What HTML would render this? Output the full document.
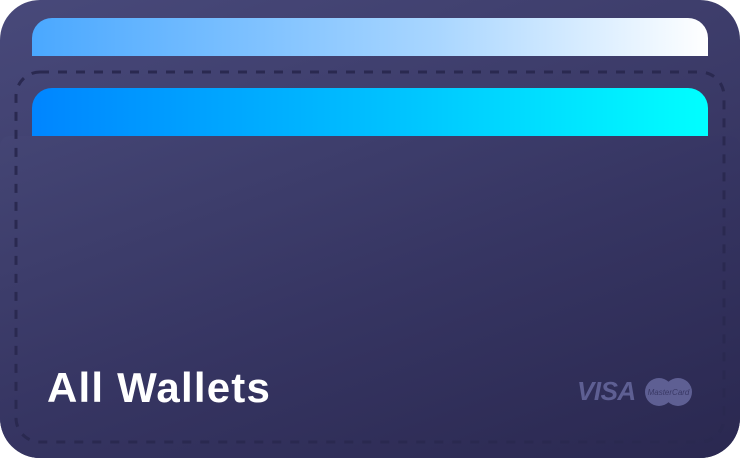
<!DOCTYPE html>
<html><head><style>
body{margin:0;width:740px;height:458px;background:#fff;overflow:hidden;position:relative;font-family:"Liberation Sans",sans-serif}
.w{position:absolute;left:0;top:0;width:740px;height:458px;border-radius:40px;background:linear-gradient(160deg,#48497a 0%,#3a3966 50%,#2a2850 100%)}
.c1{position:absolute;left:32px;top:18px;width:676px;height:38px;border-radius:20px 20px 0 0;background:linear-gradient(90deg,#4aa8ff,#a9d6ff 60%,#fff)}
.c2{position:absolute;left:32px;top:88px;width:676px;height:60px;border-radius:20px 20px 0 0;background:linear-gradient(90deg,#0085ff,#00c4ff 55%,#00ffff)}
.pk{position:absolute;left:0;top:136px;width:740px;height:322px;border-radius:10px 10px 40px 40px;background:linear-gradient(160deg,#444574 0%,#363562 50%,#2a2850 100%)}
svg{position:absolute;left:0;top:0}
.t{position:absolute;left:47px;top:364px;color:#fff;font-weight:bold;font-size:42px;letter-spacing:1.2px}
.v{position:absolute;left:577px;top:376px;color:#5e5f93;font-weight:bold;font-style:italic;font-size:26px;letter-spacing:-0.5px}
</style></head><body>
<div class="w"></div>
<div class="c1"></div>
<div class="c2"></div>
<div class="pk"></div>
<svg width="740" height="458"><rect x="16" y="72" width="708" height="370" rx="24" fill="none" stroke="#2a2950" stroke-width="3" stroke-dasharray="9 9"/>
<circle cx="659" cy="392" r="14" fill="#5e5f93"/><circle cx="678" cy="392" r="14" fill="#5e5f93"/>
<text x="668.5" y="395" font-family="Liberation Sans" font-size="8" font-style="italic" fill="#3a3966" text-anchor="middle">MasterCard</text></svg>
<div class="v">VISA</div>
<div class="t">All Wallets</div>
</body></html>
